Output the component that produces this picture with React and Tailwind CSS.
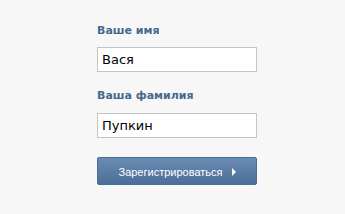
import React from 'react';

const App = () => {
  return (
    <div className="w-[345px] h-[214px] bg-[#f7f7f7] pt-[24px] pl-[97px]" style={{ fontFamily: 'Tahoma, "DejaVu Sans", sans-serif' }}>
      <div className="w-[160px] flex flex-col">
        <label className="text-[11px] font-bold text-[#45688e] leading-[14px]">Ваше имя</label>
        <div className="mt-[9px] h-[25px] bg-white border border-[#c4c4c4] px-[4px] flex items-center text-[13px] text-black">
          Вася
        </div>
        <label className="mt-[17px] text-[11px] font-bold text-[#45688e] leading-[14px]">Ваша фамилия</label>
        <div className="mt-[10px] h-[25px] bg-white border border-[#c4c4c4] px-[4px] flex items-center text-[13px] text-black">
          Пупкин
        </div>
        <button className="mt-[19px] h-[28px] pt-[2px] bg-gradient-to-b from-[#6a8cb3] to-[#4b6f98] border border-[#4a6d95] rounded-[2px] text-white text-[11px] flex items-center justify-center gap-[9px]" style={{ fontFamily: '"Liberation Sans", Arial, sans-serif' }}>
          <span>Зарегистрироваться</span>
          <svg width="4" height="8" viewBox="0 0 4 8"><path d="M0 0 L4 4 L0 8 Z" fill="#ffffff" /></svg>
        </button>
      </div>
    </div>
  );
};

export default App;
